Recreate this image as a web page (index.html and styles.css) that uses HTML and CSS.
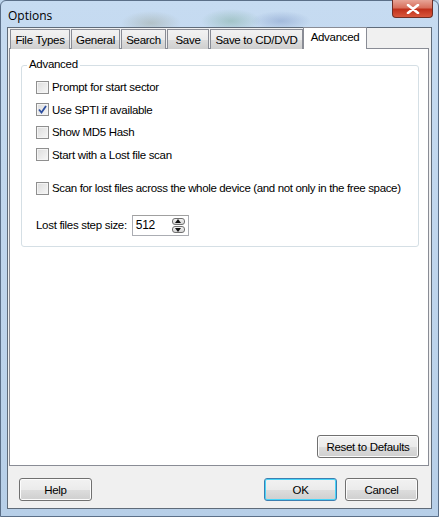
FILE: index.html
```html
<!DOCTYPE html>
<html lang="en">
<head>
  <meta charset="UTF-8">
  <title>Options</title>
  <link rel="stylesheet" href="styles.css">
</head>
<body>
  <div class="window">
    <div class="titlebar">
      <span class="title">Options</span>
      <div class="close">
        <svg width="14" height="10" viewBox="0 0 14 10"><path d="M2 1 L12 9 M12 1 L2 9" stroke="#fff" stroke-width="2.6" stroke-linecap="round"/></svg>
      </div>
    </div>

    <div class="client">
      <!-- tab strip -->
      <div class="tabs">
        <div class="tab t1">File Types</div>
        <div class="tab t2">General</div>
        <div class="tab t3">Search</div>
        <div class="tab t4">Save</div>
        <div class="tab t5">Save to CD/DVD</div>
        <div class="tab active">Advanced</div>
      </div>

      <div class="panel">
        <div class="group">
          <span class="legend">Advanced</span>
          <label class="check"><span class="box"></span>Prompt for start sector</label>
          <label class="check"><span class="box checked">
            <svg width="9" height="9" viewBox="0 0 9 9"><path d="M1 4.5 L3.5 7.5 L8 1" fill="none" stroke="#2d4fa0" stroke-width="1.8"/></svg>
          </span>Use SPTI if available</label>
          <label class="check"><span class="box"></span>Show MD5 Hash</label>
          <label class="check"><span class="box"></span>Start with a Lost file scan</label>
          <label class="check wide"><span class="box"></span>Scan for lost files across the whole device (and not only in the free space)</label>
          <div class="step">
            <span>Lost files step size:</span>
            <div class="spin">
              <span class="value">512</span>
              <div class="arrows">
                <span class="arrow up"></span>
                <span class="arrow down"></span>
              </div>
            </div>
          </div>
        </div>
        <div class="panel-foot">
          <div class="btn reset">Reset to Defaults</div>
        </div>
      </div>

      <div class="dialog-buttons">
        <div class="btn">Help</div>
        <div class="right">
          <div class="btn default">OK</div>
          <div class="btn">Cancel</div>
        </div>
      </div>
    </div>
  </div>
</body>
</html>
```

FILE: styles.css
```css
body {
    margin: 0;
    padding: 0;
    font-family: "Liberation Sans", Arial, sans-serif;
    font-size: 11px;
    letter-spacing: -0.3px;
    color: #000;
    background: #bcd4ec;
}

/* Window frame (aero glass) */

.window {
    width: 439px;
    height: 517px;
    box-sizing: border-box;
    display: flex;
    flex-direction: column;
    background:
        radial-gradient(ellipse 40px 10px at 250px 70%, rgba(80,110,150,0.25), transparent),
        radial-gradient(ellipse 30px 12px at 150px 22px, rgba(120,120,80,0.25), transparent),
        radial-gradient(ellipse 30px 12px at 230px 20px, rgba(60,130,80,0.25), transparent),
        radial-gradient(ellipse 30px 10px at 280px 20px, rgba(60,90,160,0.25), transparent),
        linear-gradient(to bottom, #c6dbf1, #b7cfe8);
    border: 1px solid #5b6f88;
    border-radius: 6px 6px 0 0;
    padding: 0 6px 7px 6px;
}

.titlebar {
    height: 26px;
    display: flex;
    justify-content: space-between;
    align-items: flex-start;
}

.title {
    font-family: "Open Sans", "Liberation Sans", sans-serif;
    font-size: 12px;
    letter-spacing: 0;
    padding: 6px 0 0 1px;
}

.close {
    width: 41px;
    height: 18px;
    margin: -1px -1px 0 0;
    box-sizing: border-box;
    border: 1px solid #6f2e25;
    border-top: none;
    border-radius: 0 0 4px 4px;
    background: linear-gradient(to bottom, #e7a496 0%, #d8705d 45%, #c0311c 55%, #d9573c 100%);
    display: flex;
    align-items: center;
    justify-content: center;
}

/* Client area */

.client {
    flex: 1;
    display: flex;
    flex-direction: column;
    background: #f0f0f0;
    border: 1px solid #5f6b79;
    padding: 0 2px 0 1px;
}

.tabs {
    display: flex;
    align-items: flex-end;
    height: 21px;
    padding-left: 1px;
    margin-bottom: -1px;
    position: relative;
    z-index: 1;
}

.tab {
    height: 20px;
    box-sizing: border-box;
    border: 1px solid #898c95;
    border-bottom: none;
    margin-right: 1px;
    background: linear-gradient(to bottom, #f2f2f2 0%, #ebebeb 50%, #dddddd 51%, #cfcfcf 100%);
    display: flex;
    align-items: center;
    justify-content: center;
    font-size: 11.5px;
}

.t1 { width: 60px; }
.t2 { width: 49px; }
.t3 { width: 45px; }
.t4 { width: 42px; }
.t5 { width: 93px; }

.tab.active {
    width: 64px;
    height: 22px;
    background: #fff;
    margin-left: -1px;
    align-items: flex-start;
    padding-top: 3px;
}

.panel {
    height: 418px;
    box-sizing: border-box;
    background: #fff;
    border: 1px solid #898c95;
    display: flex;
    flex-direction: column;
    padding: 0 9px 7px 11px;
}

/* Group box */

.group {
    position: relative;
    margin-top: 16px;
    height: 182px;
    box-sizing: border-box;
    border: 1px solid #d5dfe5;
    border-radius: 3px;
    padding: 10px 14px 0 14px;
    display: flex;
    flex-direction: column;
}

.legend {
    position: absolute;
    top: -8px;
    left: 5px;
    background: #fff;
    padding: 0 2px;
    font-size: 11.5px;
}

.check {
    display: flex;
    align-items: center;
    gap: 3px;
    height: 22.5px;
    font-size: 11.5px;
    white-space: nowrap;
}

.check.wide {
    margin-top: 11px;
    letter-spacing: -0.35px;
}

.box {
    width: 13px;
    height: 13px;
    box-sizing: border-box;
    border: 1px solid #8f8f8f;
    background: linear-gradient(135deg, #dcdcdc, #f7f7f7);
    box-shadow: inset 0 0 0 1px #f4f4f4;
    display: flex;
    align-items: center;
    justify-content: center;
}

.step {
    display: flex;
    align-items: center;
    gap: 5px;
    margin-top: 15px;
    font-size: 11.5px;
}

.spin {
    width: 57px;
    height: 21px;
    box-sizing: border-box;
    border: 1px solid #abadb3;
    border-top-color: #a0a0a0;
    display: flex;
    align-items: center;
    justify-content: space-between;
    padding: 0 3px 0 3px;
}

.value {
    font-size: 12px;
}

.arrows {
    display: flex;
    flex-direction: column;
    gap: 1px;
}

.arrow {
    width: 13px;
    height: 7px;
    box-sizing: border-box;
    border: 1px solid #707070;
    border-radius: 3px;
    background: linear-gradient(to bottom, #f2f2f2, #d4d4d4);
    position: relative;
}

.arrow::after {
    content: "";
    position: absolute;
    left: 2px;
    border-left: 3.5px solid transparent;
    border-right: 3.5px solid transparent;
}

.arrow.up::after {
    top: 0;
    border-bottom: 4px solid #111;
}

.arrow.down::after {
    top: 1px;
    border-top: 4px solid #111;
}

.panel-foot {
    margin-top: auto;
    display: flex;
    justify-content: flex-end;
}

/* Buttons */

.btn {
    width: 73px;
    height: 23px;
    box-sizing: border-box;
    border: 1px solid #707070;
    border-radius: 3px;
    background: linear-gradient(to bottom, #f2f2f2 0%, #ebebeb 50%, #dddddd 51%, #cfcfcf 100%);
    box-shadow: inset 0 0 0 1px #fcfcfc;
    display: flex;
    align-items: center;
    justify-content: center;
    font-size: 11.5px;
}

.btn.reset {
    width: 102px;
}

.btn.default {
    border-color: #3c7fb1;
    box-shadow: inset 0 0 0 1px #48d4f8;
}

.dialog-buttons {
    display: flex;
    justify-content: space-between;
    padding: 12px 11px 0 10px;
}

.right {
    display: flex;
    gap: 8px;
}
```
